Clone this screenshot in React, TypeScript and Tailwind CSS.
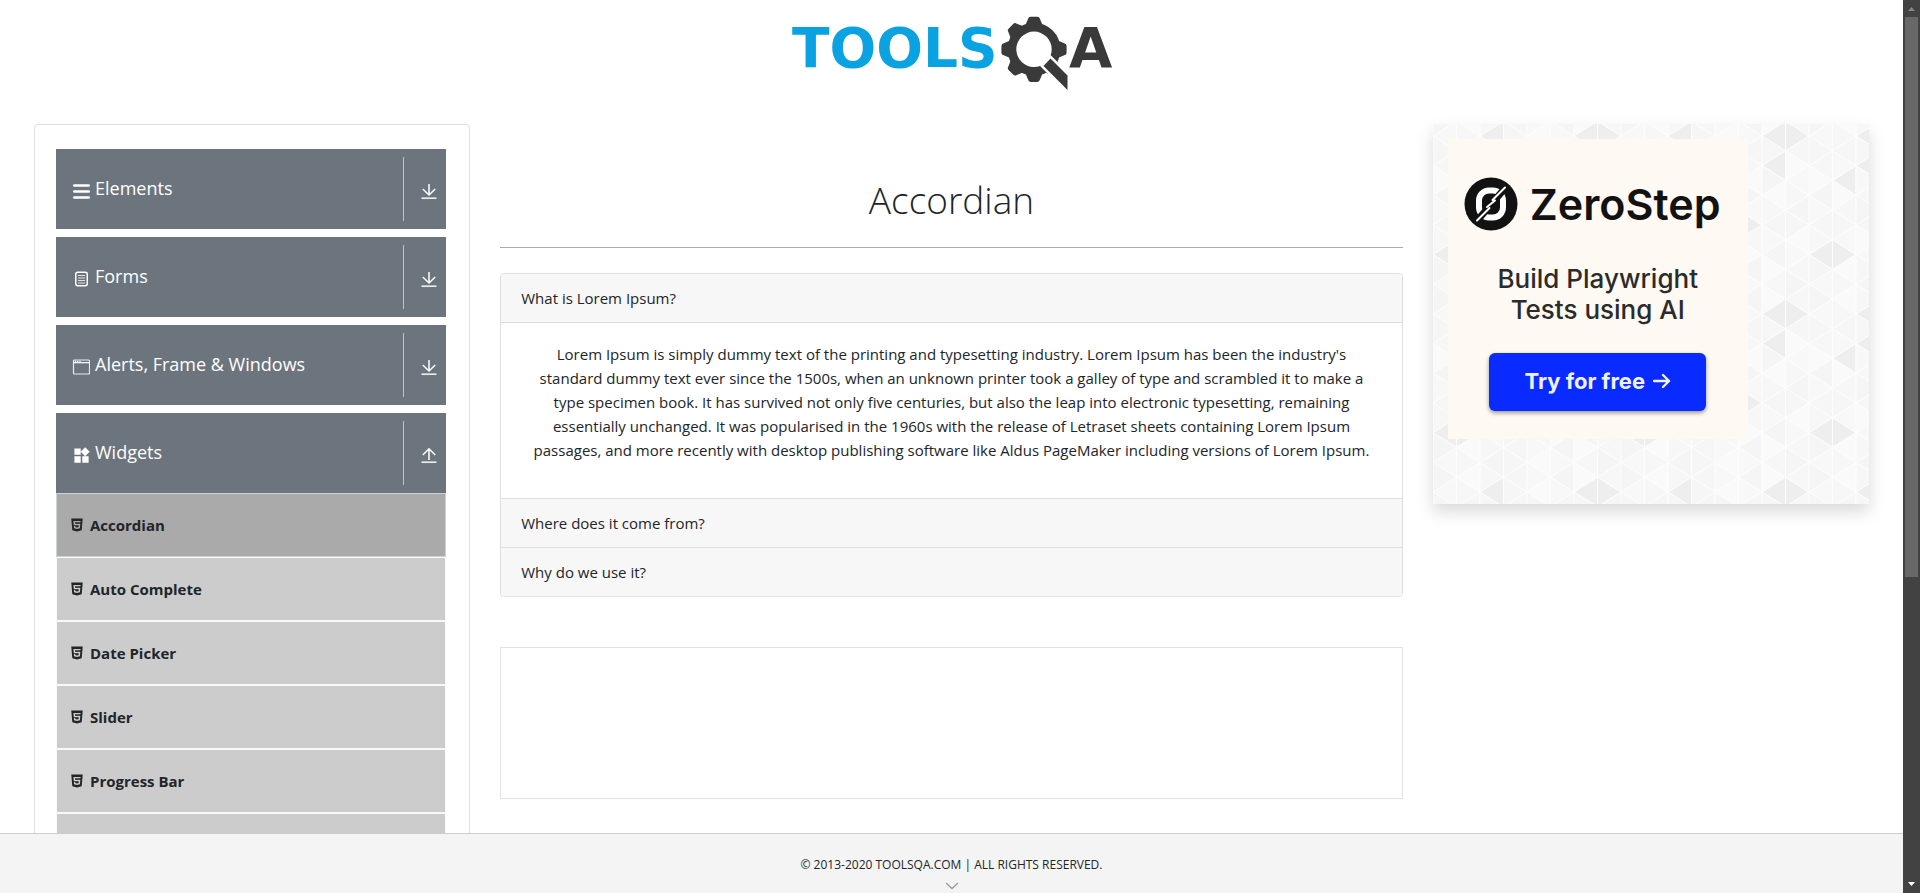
import { useState } from "react";
import type { ReactNode } from "react";
import { MdWidgets } from "react-icons/md";
import { AiFillHtml5 } from "react-icons/ai";

const teeth = [0, 90, 135, 180, 225, 270, 315];

function Logo() {
  return (
    <svg viewBox="-3 0 370 110" className="h-[110px] w-[370px]" role="img" aria-label="TOOLSQA">
      <text x="22" y="67" fill="#0aa2e0" className="font-['DejaVu_Sans'] text-[55px] font-bold">
        TOOLS
      </text>
      <g fill="#3a3a3a">
        <path
          fillRule="evenodd"
          d="M264 22.800a26.500 26.500 0 1 1 0 53a26.500 26.500 0 1 1 0-53zM264 31.600a17.700 17.700 0 1 0 0 35.400a17.700 17.700 0 1 0 0-35.400z"
        />
        {teeth.map((a) => (
          <path
            key={a}
            transform={`rotate(${a} 264 49.300)`}
            d="M255.500 25l2.500-6q.6-2.300 2.600-2.300h6.800q2 0 2.600 2.300l2.500 6z"
          />
        ))}
      </g>
      <path
        d="M280.500 58.500L297.500 75.500V90L273.500 66z"
        fill="#3a3a3a"
        stroke="#fff"
        strokeWidth="5"
        paintOrder="stroke"
      />
      <text x="299" y="67" fill="#3a3a3a" className="font-['DejaVu_Sans'] text-[56px] font-bold">
        A
      </text>
    </svg>
  );
}

function BarsIcon() {
  return (
    <svg viewBox="0 0 18 18" className="size-[18px]" fill="none" stroke="#fff">
      <path d="M2.300 3.500h14.400M2.300 9.500h14.400M2.300 15.500h14.400" strokeWidth="2.600" strokeLinecap="round" />
    </svg>
  );
}

function FormIcon() {
  return (
    <svg viewBox="0 0 18 18" className="size-[18px]" fill="none" stroke="#fff">
      <rect x="3.750" y="2.250" width="11.500" height="13.500" rx="2" strokeWidth="1.500" />
      <path d="M6 5.500h7M6 8h7M6 10.500h7M6 13h7" strokeWidth="1" opacity=".8" />
    </svg>
  );
}

function WindowIcon() {
  return (
    <svg viewBox="0 0 18 18" className="size-[18px]" fill="none" stroke="#fff">
      <rect x="1.500" y="2" width="16" height="14" rx="1" strokeWidth="1.200" opacity=".85" />
      <path d="M1.500 4.700h16" strokeWidth="1.200" />
      <path d="M3 3.300h1.200M5.200 3.300h1.200M7.400 3.300h1.200" strokeWidth="1.200" />
    </svg>
  );
}

function ArrowIcon({ up }: { up?: boolean }) {
  return (
    <svg viewBox="0 0 18 18" className="size-[18px]" fill="none" stroke="#fff">
      {up ? (
        <path d="M9 14V3M2.800 9L9 2.800L15.200 9" strokeWidth="1.500" />
      ) : (
        <path d="M9 2v10.500M2.800 7L9 13L15.200 7" strokeWidth="1.500" />
      )}
      <path d="M1.500 16.200h15" strokeWidth="1.700" opacity=".85" />
    </svg>
  );
}

function GroupHeader({
  icon,
  label,
  open,
  onClick,
}: {
  icon: ReactNode;
  label: string;
  open: boolean;
  onClick: () => void;
}) {
  return (
    <button
      type="button"
      aria-expanded={open}
      onClick={onClick}
      className="flex h-20 w-full items-center bg-[#6c757d] py-2 pl-4 text-left text-lg text-white"
    >
      <span className="flex w-[23px] justify-start pt-1">{icon}</span>
      <span className="flex-1 pb-0.5">{label}</span>
      <span className="flex h-16 w-[43px] items-center justify-center border-l border-[#bfc3c6] pl-2 pt-1">
        <ArrowIcon up={open} />
      </span>
    </button>
  );
}

const widgetItems = ["Accordian", "Auto Complete", "Date Picker", "Slider", "Progress Bar"];

const groups: { label: string; icon: ReactNode; items: string[] }[] = [
  { label: "Elements", icon: <BarsIcon />, items: [] },
  { label: "Forms", icon: <FormIcon />, items: [] },
  { label: "Alerts, Frame & Windows", icon: <WindowIcon />, items: [] },
  { label: "Widgets", icon: <MdWidgets className="size-[19px]" />, items: widgetItems },
];

function Sidebar() {
  const [open, setOpen] = useState("Widgets");
  return (
    <nav className="flex flex-col gap-2 self-start rounded border border-[#dfdfdf] py-6 pr-[23px] pl-[21px]">
      {groups.map((g) => (
        <div key={g.label}>
          <GroupHeader
            icon={g.icon}
            label={g.label}
            open={open === g.label}
            onClick={() => setOpen(open === g.label ? "" : g.label)}
          />
          {open === g.label && g.items.length > 0 && (
            <ul>
              {g.items.map((item, i) => (
                <li key={item}>
                  <a
                    href="#"
                    className={
                      i === 0
                        ? "flex h-16 items-center gap-[5px] border border-[#ccd2d8] bg-[#aaa] pl-3 text-[15px] font-bold"
                        : "flex h-16 items-center gap-[5px] border border-[#f8f9fa] bg-[#ccc] pl-3 text-[15px] font-bold"
                    }
                  >
                    <AiFillHtml5 className="size-4" />
                    {item}
                  </a>
                </li>
              ))}
              <li className="h-16 border border-[#f8f9fa] bg-[#ccc]" aria-hidden="true" />
            </ul>
          )}
        </div>
      ))}
    </nav>
  );
}

const questions = [
  {
    q: "What is Lorem Ipsum?",
    a: "Lorem Ipsum is simply dummy text of the printing and typesetting industry. Lorem Ipsum has been the industry's standard dummy text ever since the 1500s, when an unknown printer took a galley of type and scrambled it to make a type specimen book. It has survived not only five centuries, but also the leap into electronic typesetting, remaining essentially unchanged. It was popularised in the 1960s with the release of Letraset sheets containing Lorem Ipsum passages, and more recently with desktop publishing software like Aldus PageMaker including versions of Lorem Ipsum.",
  },
  { q: "Where does it come from?", a: "" },
  { q: "Why do we use it?", a: "" },
];

function Accordion() {
  const [open, setOpen] = useState(0);
  return (
    <div className="divide-y divide-[#dfdfdf] overflow-hidden rounded border border-[#dfdfdf]">
      {questions.map((item, i) => (
        <section key={item.q}>
          <button
            type="button"
            aria-expanded={open === i}
            onClick={() => setOpen(open === i ? -1 : i)}
            className="block w-full bg-[#f7f7f7] px-5 py-3 text-left text-[15px] leading-6"
          >
            {item.q}
          </button>
          {open === i && item.a && (
            <p className="border-t border-[#dadada] px-7 pt-[19px] pb-9 text-center text-[15px] leading-6">
              {item.a}
            </p>
          )}
        </section>
      ))}
    </div>
  );
}

const COL = 23.5;
const HALF = 178 / 12;
const darkCells = ["6:1", "7:1", "6:3", "2:1", "2:3", "1:4", "0:9", "1:9", "5:7"];
const shades = ["#f5f5f5", "#f7f7f7", "#f8f8f8", "#fafafa", "#f6f6f6"];

function TrianglePattern() {
  const cells: ReactNode[] = [];
  for (let j = 0; j < 8; j++) {
    for (let m = 0; m <= 13; m++) {
      const y = HALF * m - 2.8;
      const left = j * COL;
      const right = left + COL;
      const pts =
        (j + m) % 2 === 1
          ? `${left},${y} ${right},${y - HALF} ${right},${y + HALF}`
          : `${right},${y} ${left},${y - HALF} ${left},${y + HALF}`;
      const mm = m % 12;
      const fill = darkCells.includes(`${j}:${mm}`) ? "#eeeeee" : shades[(j * 3 + mm * 7 + j * mm) % 5];
      cells.push(<polygon key={`${j}:${m}`} points={pts} fill={fill} stroke="#fdfdfd" strokeWidth="1" />);
    }
  }
  return (
    <svg className="absolute inset-0 size-full" aria-hidden="true">
      <defs>
        <pattern id="triangles" width="188" height="178" patternUnits="userSpaceOnUse">
          {cells}
        </pattern>
      </defs>
      <rect width="100%" height="100%" fill="url(#triangles)" />
    </svg>
  );
}

function ZeroStepMark() {
  return (
    <svg viewBox="0 0 54 54" className="size-[54px]" aria-hidden="true">
      <circle cx="27" cy="27" r="26.500" fill="#121212" />
      <rect x="15" y="13.500" width="24" height="27" rx="10" fill="none" stroke="#fff" strokeWidth="6" />
      <path d="M12 45L42 10" stroke="#121212" strokeWidth="7" />
      <path
        d="M13 43.500L25.500 31M23 30L31 23.500M28.500 23L41 10.500"
        stroke="#fff"
        strokeWidth="2"
        strokeLinecap="round"
      />
    </svg>
  );
}

function Ad() {
  return (
    <aside className="relative h-[380px] self-start shadow-[0_8px_16px_rgba(0,0,0,0.15)]">
      <TrianglePattern />
      <div className="relative p-[15px]">
        <a
          href="#"
          className="flex h-[300px] w-[300px] flex-col items-center bg-[#fef9f2] pt-[38px] font-[Inter] text-[#2b2b2b]"
        >
          <span className="flex w-full items-center gap-3 pl-4">
            <ZeroStepMark />
            <span className="text-[43px] leading-[54px] font-semibold text-[#121212]">ZeroStep</span>
          </span>
          <span className="mt-8 text-center text-[26px] leading-[31px] font-medium">
            Build Playwright
            <br />
            Tests using AI
          </span>
          <span className="mt-7 flex h-[58px] w-[217px] items-center justify-center gap-2 rounded-md bg-[#0a2bff] pb-0.5 text-[22px] font-bold text-[#eef2ff] shadow-[0_2px_4px_rgba(0,0,0,0.4)]">
            Try for free
            <svg viewBox="0 0 18 16" className="h-4 w-[18px]" fill="none" stroke="currentColor" strokeWidth="2.400">
              <path d="M1 8h15M10 2l6 6l-6 6" strokeLinecap="round" strokeLinejoin="round" />
            </svg>
          </span>
        </a>
      </div>
    </aside>
  );
}

function ScrollBar() {
  return (
    <div className="flex w-[17px] shrink-0 flex-col items-center justify-between bg-[#424242]" aria-hidden="true">
      <div className="flex h-2/3 w-full flex-col items-center">
        <svg viewBox="0 0 17 17" className="size-[17px] shrink-0">
          <path d="M5 11L8.500 7L12 11z" fill="#868686" />
        </svg>
        <div className="h-[560px] w-[13px] bg-[#686868]" />
      </div>
      <svg viewBox="0 0 17 17" className="size-[17px] shrink-0">
        <path d="M5 6L8.500 10L12 6z" fill="#fff" />
      </svg>
    </div>
  );
}

export default function App() {
  return (
    <div className="flex h-screen overflow-hidden bg-white font-['Open_Sans','Noto_Sans',sans-serif] text-[#212529]">
      <div className="flex min-w-0 flex-1 flex-col">
        <div className="min-h-0 flex-1 overflow-hidden">
          <header className="flex justify-center pb-[14px]">
            <a href="#">
              <Logo />
            </a>
          </header>
          <main className="grid grid-cols-4 gap-[30px] px-[34px]">
            <Sidebar />
            <div className="col-span-2 pt-[50px]">
              <h1 className="border-b border-[#aaa] pb-[22px] text-center text-[37px] leading-[51px] font-light">
                Accordian
              </h1>
              <div className="pt-[25px]">
                <Accordion />
              </div>
              <div className="mt-[50px] h-38 border border-[#e2e2e2]" />
            </div>
            <Ad />
          </main>
        </div>
        <footer className="flex h-[60px] shrink-0 flex-col items-center border-t border-[#ccc] bg-[#f4f4f4] pt-[21px] text-xs leading-5">
          <span>© 2013-2020 TOOLSQA.COM | ALL RIGHTS RESERVED.</span>
          <svg viewBox="0 0 14 8" className="mt-[7px] h-2 w-[14px]" fill="none" stroke="#999" strokeWidth="1.300">
            <path d="M1 1l6 5.500l6-5.500" />
          </svg>
        </footer>
      </div>
      <ScrollBar />
    </div>
  );
}
